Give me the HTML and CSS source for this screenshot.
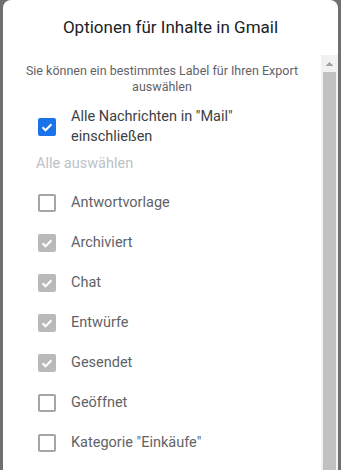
FILE: index.html
```
<!DOCTYPE html>
<html lang="de">
<head>
  <meta charset="UTF-8" />
  <meta name="viewport" content="width=device-width, initial-scale=1.0"/>
  <title>Optionen für Inhalte in Gmail</title>
  <link rel="stylesheet" href="styles.css">
</head>
<body>

<div class="dialog">
  <h1 class="dialog-title">Optionen für Inhalte in Gmail</h1>

  <div class="dialog-body">
    <div class="scroll-content">
      <p class="hint">Sie können ein bestimmtes Label für Ihren Export auswählen</p>

      <label class="option option-main">
        <span class="box box-on">
          <svg viewBox="0 0 18 18"><path d="M4.5 9.3 L7.5 12.3 L13.5 6.2"/></svg>
        </span>
        <span class="option-text">Alle Nachrichten in "Mail" einschließen</span>
      </label>

      <div class="select-all">Alle auswählen</div>

      <div class="labels">
        <label class="option">
          <span class="box"></span>
          <span class="option-text">Antwortvorlage</span>
        </label>
        <label class="option">
          <span class="box box-dim"><svg viewBox="0 0 18 18"><path d="M4.5 9.3 L7.5 12.3 L13.5 6.2"/></svg></span>
          <span class="option-text">Archiviert</span>
        </label>
        <label class="option">
          <span class="box box-dim"><svg viewBox="0 0 18 18"><path d="M4.5 9.3 L7.5 12.3 L13.5 6.2"/></svg></span>
          <span class="option-text">Chat</span>
        </label>
        <label class="option">
          <span class="box box-dim"><svg viewBox="0 0 18 18"><path d="M4.5 9.3 L7.5 12.3 L13.5 6.2"/></svg></span>
          <span class="option-text">Entwürfe</span>
        </label>
        <label class="option">
          <span class="box box-dim"><svg viewBox="0 0 18 18"><path d="M4.5 9.3 L7.5 12.3 L13.5 6.2"/></svg></span>
          <span class="option-text">Gesendet</span>
        </label>
        <label class="option">
          <span class="box"></span>
          <span class="option-text">Geöffnet</span>
        </label>
        <label class="option">
          <span class="box"></span>
          <span class="option-text">Kategorie "Einkäufe"</span>
        </label>
      </div>
    </div>

    <div class="scrollbar">
      <div class="scrollbar-btn"></div>
      <div class="scrollbar-thumb"></div>
    </div>
  </div>
</div>

</body>
</html>
```

FILE: styles.css
```
* {
  margin: 0;
  padding: 0;
  box-sizing: border-box;
}

html, body {
  height: 100%;
  overflow: hidden;
}

body {
  font-family: Roboto, "Noto Sans", Arial, sans-serif;
  background: #6f6f6f;
  color: #3c4043;
}

.dialog {
  margin-left: 3px;
  width: 335px;
  height: 470px;
  background: #ffffff;
  border-radius: 8px 8px 0 0;
  display: flex;
  flex-direction: column;
}

.dialog-title {
  height: 55px;
  padding-top: 15px;
  font-size: 17px;
  font-weight: 400;
  line-height: 24px;
  text-align: center;
  color: #202124;
}

.dialog-body {
  flex: 1;
  display: flex;
  overflow: hidden;
}

.scroll-content {
  flex: 1;
  padding: 8px 0 0 35px;
}

.scrollbar {
  flex: none;
  width: 17px;
  background: #f1f1f1;
  display: flex;
  flex-direction: column;
}

.scrollbar-btn {
  height: 17px;
  background-image:
    linear-gradient(to top left, #a3a3a3 50%, transparent 50%),
    linear-gradient(to top right, #a3a3a3 50%, transparent 50%);
  background-size: 4px 4px, 4px 4px;
  background-position: 5px 7px, 9px 7px;
  background-repeat: no-repeat;
}

.scrollbar-thumb {
  flex: 1;
  margin: 0 2px;
  background: #c1c1c1;
}

.hint {
  margin-left: -35px;
  padding: 0 20px;
  font-size: 12.5px;
  line-height: 16px;
  text-align: center;
  color: #5f6368;
}

.option {
  display: flex;
  align-items: center;
  gap: 15px;
  height: 40px;
  font-size: 14.5px;
  line-height: 20px;
  color: #5f6368;
}

.option-main {
  margin-top: 12px;
  height: auto;
  padding-right: 70px;
  color: #3c4043;
}

.box {
  flex: none;
  width: 18px;
  height: 18px;
  border: 2px solid #a5a5a5;
  border-radius: 2px;
  display: flex;
  align-items: center;
  justify-content: center;
}

.box svg {
  width: 18px;
  height: 18px;
  fill: none;
  stroke: #ffffff;
  stroke-width: 2;
}

.box-on {
  background: #1a73e8;
  border: none;
}

.box-dim {
  background: #b9b9b9;
  border: none;
}

.select-all {
  margin-top: 7px;
  margin-left: -2px;
  font-size: 14.5px;
  line-height: 20px;
  color: #bdc1c6;
}

.labels {
  margin-top: 9px;
}
```
